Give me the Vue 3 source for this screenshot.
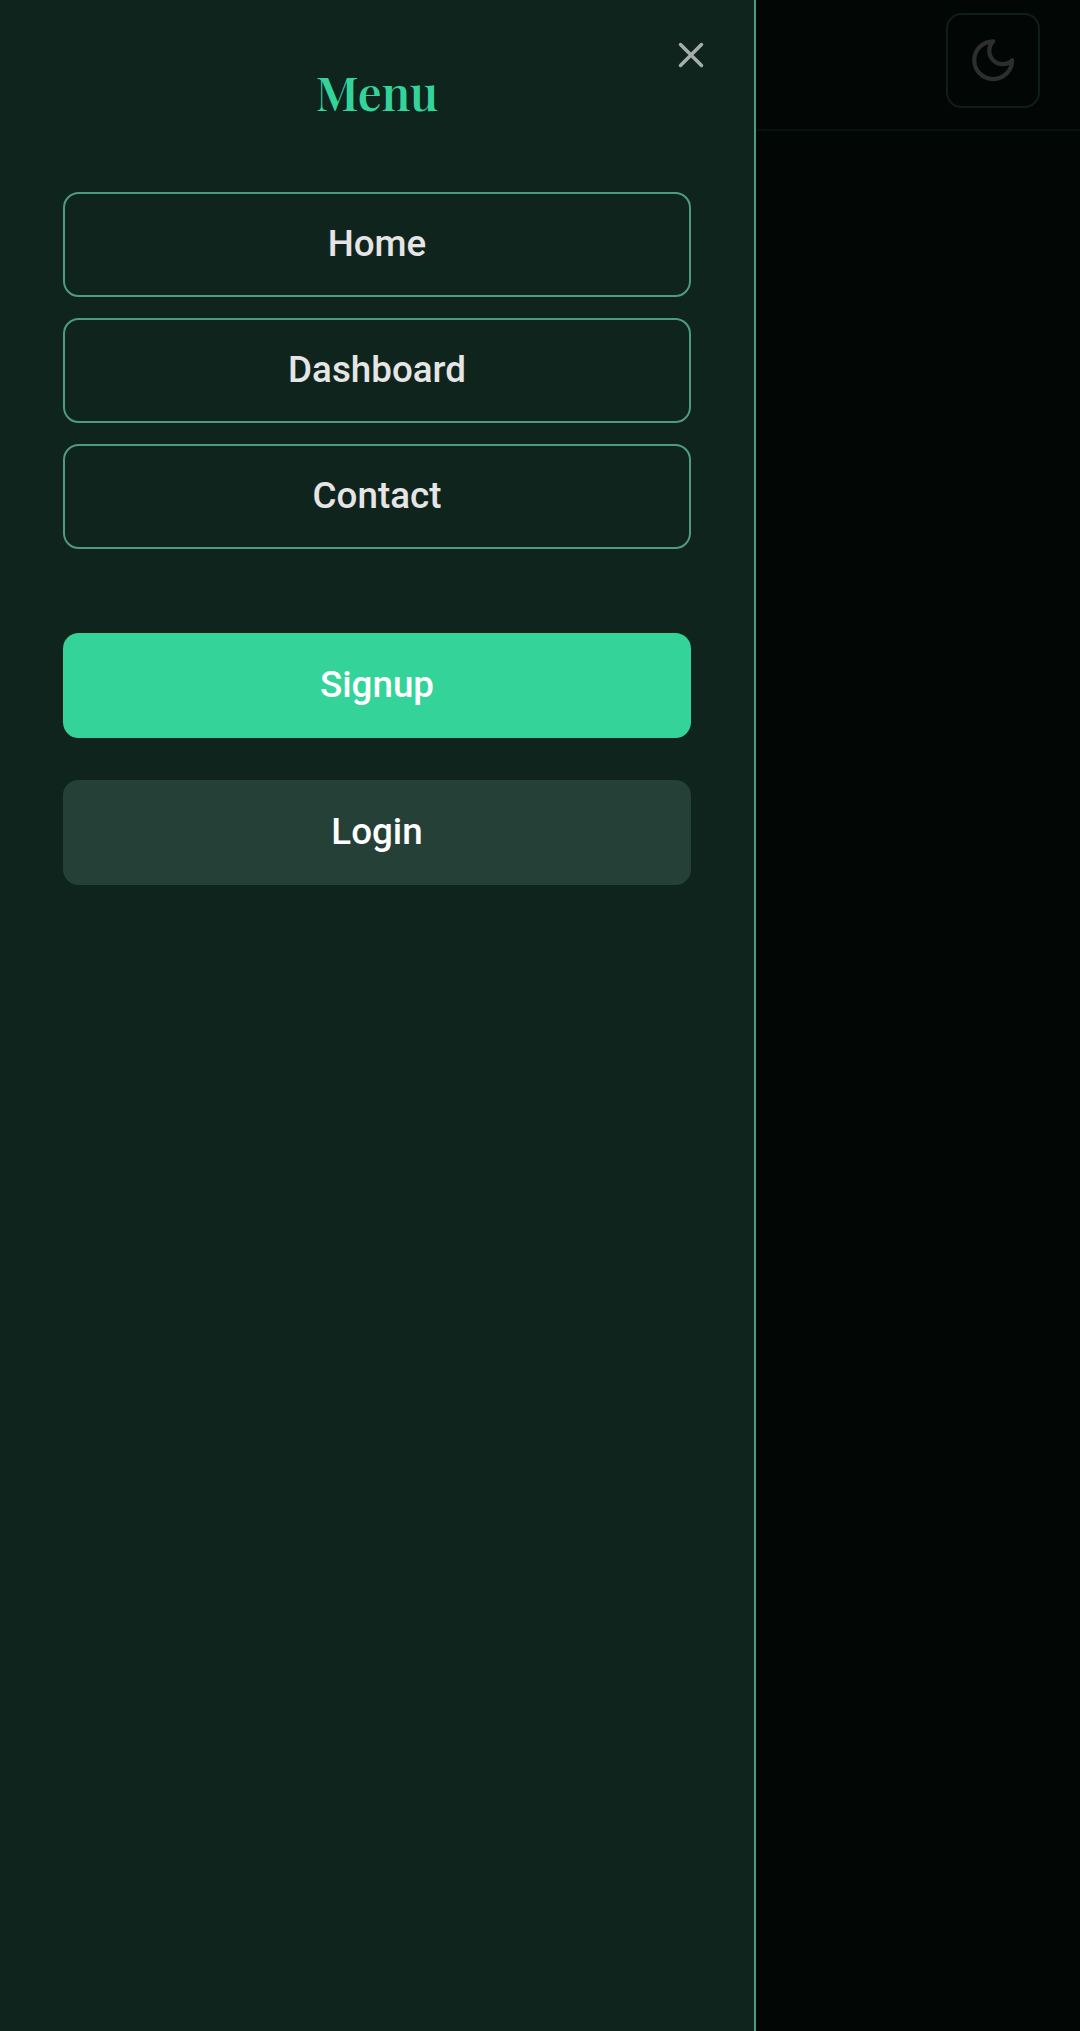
<script setup>
const links = ['Home', 'Dashboard', 'Contact']
</script>

<template>
  <div class="page">
    <aside class="drawer">
      <button class="close" aria-label="Close">
        <svg viewBox="0 0 24 24"><path d="M18 6 6 18M6 6l12 12" /></svg>
      </button>
      <h2 class="title">Menu</h2>
      <nav class="links">
        <a v-for="link in links" :key="link" class="btn outline">{{ link }}</a>
      </nav>
      <div class="actions">
        <a class="btn primary">Signup</a>
        <a class="btn secondary">Login</a>
      </div>
    </aside>
    <div class="backdrop">
      <header class="topbar">
        <button class="theme" aria-label="Theme">
          <svg viewBox="0 0 24 24"><path d="M12 3a6 6 0 0 0 9 9 9 9 0 1 1-9-9Z" /></svg>
        </button>
      </header>
    </div>
  </div>
</template>

<style>
body {
  background: #020605;
}
</style>

<style scoped>
.page {
  display: flex;
  height: 2031px;
  overflow: hidden;
  background: #020706;
  font-family: Roboto, "Liberation Sans", sans-serif;
}
.drawer {
  position: relative;
  box-sizing: border-box;
  width: 756px;
  flex: none;
  padding: 63px 63px 0;
  background: #10241e;
  border-right: 2px solid #4f9a82;
}
button {
  padding: 0;
  background: none;
  border: 0;
}
svg {
  display: block;
  fill: none;
  stroke: currentColor;
  stroke-width: 2;
  stroke-linecap: round;
  stroke-linejoin: round;
}
.close {
  position: absolute;
  top: 34px;
  right: 42px;
  color: #a5aeab;
}
.close svg {
  width: 42px;
  height: 42px;
}
.title {
  margin: 0;
  height: 66px;
  line-height: 57px;
  text-align: center;
  font-family: "Playfair Display", "Liberation Serif", serif;
  font-size: 47.25px;
  font-weight: 600;
  color: #34d399;
}
.links {
  display: flex;
  flex-direction: column;
  gap: 21px;
  margin-top: 63px;
}
.actions {
  display: flex;
  flex-direction: column;
  gap: 42px;
  margin-top: 84px;
}
.btn {
  display: flex;
  align-items: center;
  justify-content: center;
  box-sizing: border-box;
  height: 105px;
  padding-bottom: 2px;
  border-radius: 15.75px;
  font-size: 36.75px;
  font-weight: 500;
  color: #fff;
}
.outline {
  border: 2px solid #4f9a82;
  color: #e5e5e5;
}
.primary {
  background: #34d399;
}
.secondary {
  background: #254137;
}
.backdrop {
  flex: 1;
}
.topbar {
  display: flex;
  justify-content: flex-end;
  box-sizing: border-box;
  height: 131px;
  padding: 13px 40px 0 0;
  border-bottom: 2px solid #07110e;
}
.theme {
  display: flex;
  align-items: center;
  justify-content: center;
  box-sizing: border-box;
  width: 94px;
  height: 95px;
  border: 2px solid #0f1e1a;
  border-radius: 15.75px;
  color: #2e2e2e;
}
.theme svg {
  width: 50.4px;
  height: 50.4px;
}
</style>
